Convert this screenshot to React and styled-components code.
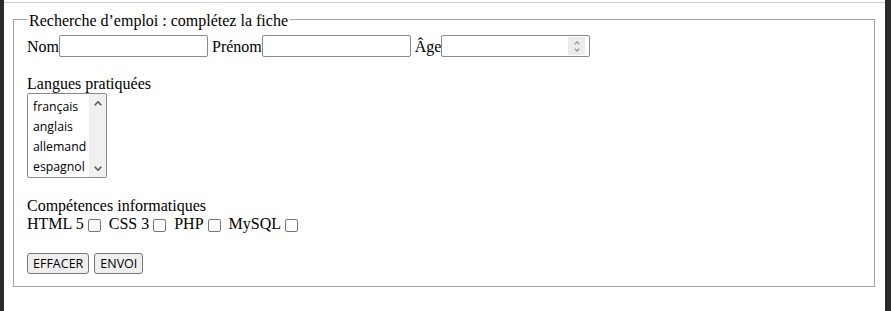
import React from "react";
import styled, { createGlobalStyle } from "styled-components";

const GlobalStyle = createGlobalStyle`
  html, body { margin: 0; padding: 0; background: #ffffff; }
  body {
    font-family: "Liberation Serif", "Times New Roman", serif;
    font-size: 16px;
    color: #000;
  }
  * { box-sizing: border-box; }
`;

const Window = styled.div`
  display: flex;
  width: 891px;
  height: 311px;
  overflow: hidden;
  background: #fff;
`;

const Edge = styled.div`
  flex: 0 0 ${(p) => p.$w}px;
  background: #2b2b2b;
`;

const Page = styled.main`
  flex: 1;
  display: flex;
  flex-direction: column;
  padding-top: 2px;
`;

const TopRule = styled.div`
  height: 1px;
  background: #cfcfcf;
`;

const Fieldset = styled.fieldset`
  margin: 5px 10px 0 9px;
  border: 1px solid #a3a3a3;
  padding: 5px 13px 12px 13px;
  min-width: 0;
`;

const Legend = styled.legend`
  padding: 4px 2px 0 2px;
  line-height: 18px;
  font-size: 16px;
`;

const Content = styled.div`
  display: flex;
  flex-direction: column;
  align-items: flex-start;
`;

const FieldsRow = styled.div`
  display: flex;
  align-items: center;
  height: 22px;
  gap: 4px;
`;

const Field = styled.label`
  display: flex;
  align-items: center;
  line-height: 18px;
  margin-top: 2px;
`;

const TextInput = styled.input`
  width: 149px;
  height: 22px;
  margin: 0;
  padding: 1px 2px;
  border: 1px solid #8a8a8a;
  border-radius: 2px;
  background: #fff;
  font-family: "Open Sans", "Liberation Sans", sans-serif;
  font-size: 12.5px;
  margin-top: -2px;
  &::-webkit-inner-spin-button,
  &::-webkit-outer-spin-button {
    -webkit-appearance: none;
    margin: 0;
  }
`;

const NumberWrap = styled.span`
  position: relative;
  display: inline-flex;
  margin-top: -2px;
`;

const NumberInput = styled(TextInput)`
  margin-top: 0;
  -moz-appearance: textfield;
`;

const Spinner = styled.span`
  position: absolute;
  top: 2px;
  right: 5px;
  width: 17px;
  height: 18px;
  background: #ececec;
  display: flex;
  align-items: center;
  justify-content: center;
  pointer-events: none;
`;

const SectionLabel = styled.div`
  line-height: 18px;
  margin-top: ${(p) => p.$mt}px;
`;

const ListBox = styled.div`
  position: relative;
  width: 80px;
  height: 85px;
  border: 1px solid #8a8a8a;
  border-radius: 2px;
  background: #fff;
  display: flex;
`;

const Options = styled.div`
  flex: 1;
  display: flex;
  flex-direction: column;
  padding-top: 3px;
`;

const Option = styled.div`
  height: 20px;
  line-height: 20px;
  padding-left: 5px;
  font-family: "Open Sans", "Liberation Sans", sans-serif;
  font-size: 12.3px;
  color: #000;
  white-space: nowrap;
`;

const ScrollBar = styled.div`
  width: 17px;
  background: #f0f0f0;
  display: flex;
  flex-direction: column;
  justify-content: space-between;
  align-items: center;
  padding: 7px 0 6px 0;
`;

const CheckRow = styled.div`
  display: flex;
  align-items: flex-start;
  height: 18px;
  gap: 8px;
`;

const CheckLabel = styled.label`
  display: flex;
  align-items: flex-start;
  line-height: 18px;
  white-space: pre;
`;

const Check = styled.input.attrs({ type: "checkbox" })`
  -webkit-appearance: none;
  appearance: none;
  width: 13px;
  height: 13px;
  margin: 4px 0 0 4px;
  border: 1px solid #767676;
  border-radius: 2px;
  background: #fff;
`;

const ButtonRow = styled.div`
  display: flex;
  gap: 5px;
  margin-top: 20px;
`;

const Button = styled.button`
  height: 21px;
  margin: 0;
  padding: 0 5px;
  border: 1px solid #767676;
  border-radius: 3px;
  background: #efefef;
  color: #000;
  font-family: "Open Sans", "Liberation Sans", sans-serif;
  font-size: 12.5px;
  line-height: 19px;
`;

const Chevron = ({ dir, w = 8, h = 5, color = "#505050", sw = 1.5 }) => (
  <svg width={w} height={h} viewBox={`0 0 ${w} ${h}`} aria-hidden="true">
    <polyline
      points={
        dir === "up"
          ? `0.7,${h - 0.7} ${w / 2},0.8 ${w - 0.7},${h - 0.7}`
          : `0.7,0.7 ${w / 2},${h - 0.8} ${w - 0.7},0.7`
      }
      fill="none"
      stroke={color}
      strokeWidth={sw}
    />
  </svg>
);

const SpinStack = styled.span`
  display: flex;
  flex-direction: column;
  gap: 3px;
`;

export default function App() {
  const langues = ["français", "anglais", "allemand", "espagnol"];
  const competences = ["HTML 5", "CSS 3", "PHP", "MySQL"];
  return (
    <>
      <GlobalStyle />
      <Window>
        <Edge $w={4} />
        <Page>
          <TopRule />
          <form onSubmit={(e) => e.preventDefault()}>
            <Fieldset>
              <Legend>Recherche d’emploi : complétez la fiche</Legend>
              <Content>
                <FieldsRow>
                  <Field>
                    Nom
                    <TextInput type="text" name="nom" />
                  </Field>
                  <Field>
                    Prénom
                    <TextInput type="text" name="prenom" />
                  </Field>
                  <Field>
                    Âge
                    <NumberWrap>
                      <NumberInput type="number" name="age" />
                      <Spinner>
                        <SpinStack>
                          <Chevron dir="up" w={6} h={4} color="#8c8c8c" sw={1.1} />
                          <Chevron dir="down" w={6} h={4} color="#8c8c8c" sw={1.1} />
                        </SpinStack>
                      </Spinner>
                    </NumberWrap>
                  </Field>
                </FieldsRow>

                <SectionLabel $mt={18}>Langues pratiquées</SectionLabel>
                <ListBox role="listbox" aria-multiselectable="true">
                  <Options>
                    {langues.map((l) => (
                      <Option role="option" key={l}>
                        {l}
                      </Option>
                    ))}
                  </Options>
                  <ScrollBar>
                    <Chevron dir="up" />
                    <Chevron dir="down" />
                  </ScrollBar>
                </ListBox>

                <SectionLabel $mt={19}>Compétences informatiques</SectionLabel>
                <CheckRow>
                  {competences.map((c) => (
                    <CheckLabel key={c}>
                      {c}
                      <Check name={c} />
                    </CheckLabel>
                  ))}
                </CheckRow>

                <ButtonRow>
                  <Button type="reset">EFFACER</Button>
                  <Button type="submit">ENVOI</Button>
                </ButtonRow>
              </Content>
            </Fieldset>
          </form>
        </Page>
        <Edge $w={6} />
      </Window>
    </>
  );
}
